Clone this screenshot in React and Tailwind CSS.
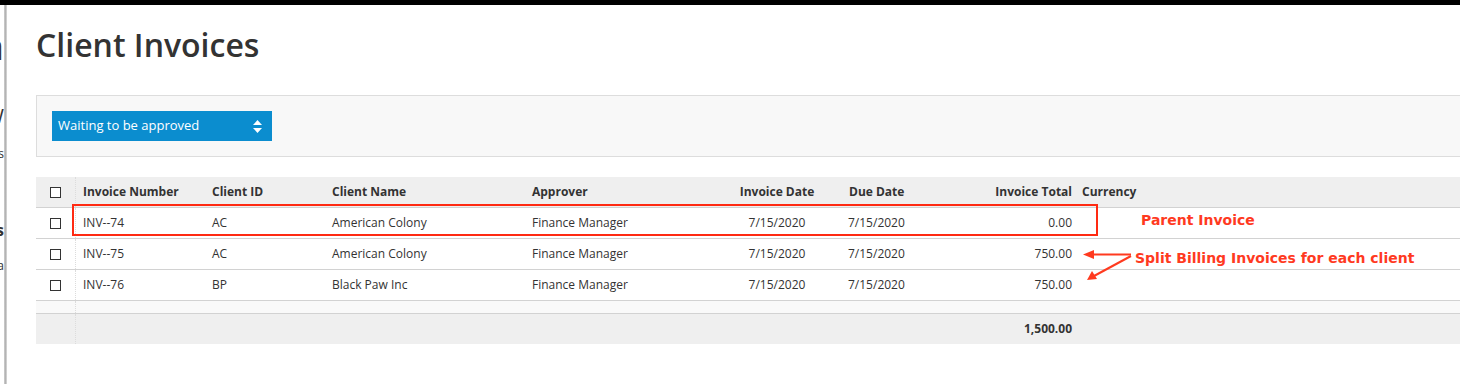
import React from "react";

const rows = [
  { num: "INV--74", id: "AC", name: "American Colony", appr: "Finance Manager", inv: "7/15/2020", due: "7/15/2020", total: "0.00" },
  { num: "INV--75", id: "AC", name: "American Colony", appr: "Finance Manager", inv: "7/15/2020", due: "7/15/2020", total: "750.00" },
  { num: "INV--76", id: "BP", name: "Black Paw Inc", appr: "Finance Manager", inv: "7/15/2020", due: "7/15/2020", total: "750.00" },
];

const grid = "grid grid-cols-[40px_129px_120px_200px_187px_130px_110px_126px_1fr]";

function Box() {
  return <span className="block h-[11px] w-[11px] border border-[#333] bg-white" />;
}

function Row({ r }) {
  return (
    <div className={`${grid} h-[31px] items-center border-b border-[#d2d2d2] bg-white text-[12px] text-[#333]`}>
      <div className="flex h-full items-center justify-center border-r border-dotted border-[#dcdcdc]"><Box /></div>
      <div className="pl-[7px]">{r.num}</div>
      <div className="pl-[7px]">{r.id}</div>
      <div className="pl-[7px]">{r.name}</div>
      <div className="pl-[7px]">{r.appr}</div>
      <div className="text-center">{r.inv}</div>
      <div className="pl-[6px]">{r.due}</div>
      <div className="pr-[6px] text-right">{r.total}</div>
      <div />
    </div>
  );
}

export default function App() {
  return (
    <div className="relative flex h-[384px] w-[1460px] flex-col overflow-hidden bg-white font-['Open_Sans',sans-serif]">
      <div className="h-[5px] shrink-0 bg-black" />
      <div className="flex flex-1">
        <div className="flex w-[4px] shrink-0 flex-col items-end overflow-hidden whitespace-nowrap text-[#333]">
          <div className="mt-[22px] text-[36px] leading-[40px]">ga</div>
          <div className="mt-[37px] text-[20px] leading-[24px]">W</div>
          <div className="mt-[19px] text-[12px] leading-[14px]">ts</div>
          <div className="mt-[59px] text-[16px] font-bold leading-[20px]">as</div>
          <div className="mt-[19px] text-[12px] leading-[14px]">la</div>
        </div>
        <div className="w-[3px] shrink-0 bg-gradient-to-r from-[#cfcfcf] via-[#b4b4b4] to-[#dcdcdc]" />
        <main className="flex-1 pl-[29px]">
          <h1 className="mt-[20px] text-[32px] font-semibold leading-[40px] text-[#333]">Client Invoices</h1>
          <div className="mt-[30px] border-y border-l border-[#dddddd] bg-[#f8f8f8] pb-[15px] pl-[15px] pt-[15px]">
            <div className="flex h-[30px] w-[220px] items-center justify-between bg-[#0b8dcf] pl-[6px] pr-[10px] text-[13px] text-white">
              <span>Waiting to be approved</span>
              <svg width="9" height="13" viewBox="0 0 9 13">
                <path d="M4.5 0 L9 5 H0 Z" fill="white" />
                <path d="M0 8 H9 L4.5 13 Z" fill="white" />
              </svg>
            </div>
          </div>
          <div className="mt-[20px]">
            <div className={`${grid} h-[31px] items-center border-b border-[#d2d2d2] bg-[#efefef] text-[12px] font-bold text-[#333]`}>
              <div className="flex h-full items-center justify-center border-r border-dotted border-[#dcdcdc]"><Box /></div>
              <div className="pl-[7px]">Invoice Number</div>
              <div className="pl-[7px]">Client ID</div>
              <div className="pl-[7px]">Client Name</div>
              <div className="pl-[7px]">Approver</div>
              <div className="text-center">Invoice Date</div>
              <div className="pl-[7px]">Due Date</div>
              <div className="pr-[6px] text-right">Invoice Total</div>
              <div className="pl-[4px]">Currency</div>
            </div>
            {rows.map((r) => (
              <Row key={r.num} r={r} />
            ))}
            <div className={`${grid} h-[13px] border-b border-[#d2d2d2] bg-[#f9f9f9]`}>
              <div className="border-r border-dotted border-[#dcdcdc]" />
            </div>
            <div className={`${grid} h-[30px] items-center bg-[#efefef] text-[12px] font-bold text-[#333]`}>
              <div className="h-full border-r border-dotted border-[#dcdcdc]" />
              <div /><div /><div /><div /><div /><div />
              <div className="pr-[6px] text-right">1,500.00</div>
              <div />
            </div>
          </div>
        </main>
      </div>

      <div className="pointer-events-none absolute left-[72px] top-[204px] h-[32px] w-[1026px] border-2 border-[#ff2a12]" />
      <div className="pointer-events-none absolute left-[1141px] top-[211px] font-['DejaVu_Sans',sans-serif] text-[14px] font-bold leading-[18px] text-[#ff3a1f]">
        Parent Invoice
      </div>
      <div className="pointer-events-none absolute left-[1135px] top-[249px] font-['DejaVu_Sans',sans-serif] text-[14px] font-bold leading-[18px] text-[#ff3a1f]">
        Split Billing Invoices for each client
      </div>
      <svg className="pointer-events-none absolute left-0 top-0" width="1460" height="384" viewBox="0 0 1460 384">
        <line x1="1131" y1="254.5" x2="1090" y2="254.5" stroke="#ff3a1f" strokeWidth="2" />
        <path d="M1083 254.5 L1094 250 L1094 259 Z" fill="#ff3a1f" />
        <line x1="1131" y1="256" x2="1094" y2="276" stroke="#ff3a1f" strokeWidth="2" />
        <path d="M1087 280 L1092 271 L1097 279 Z" fill="#ff3a1f" />
      </svg>
    </div>
  );
}
